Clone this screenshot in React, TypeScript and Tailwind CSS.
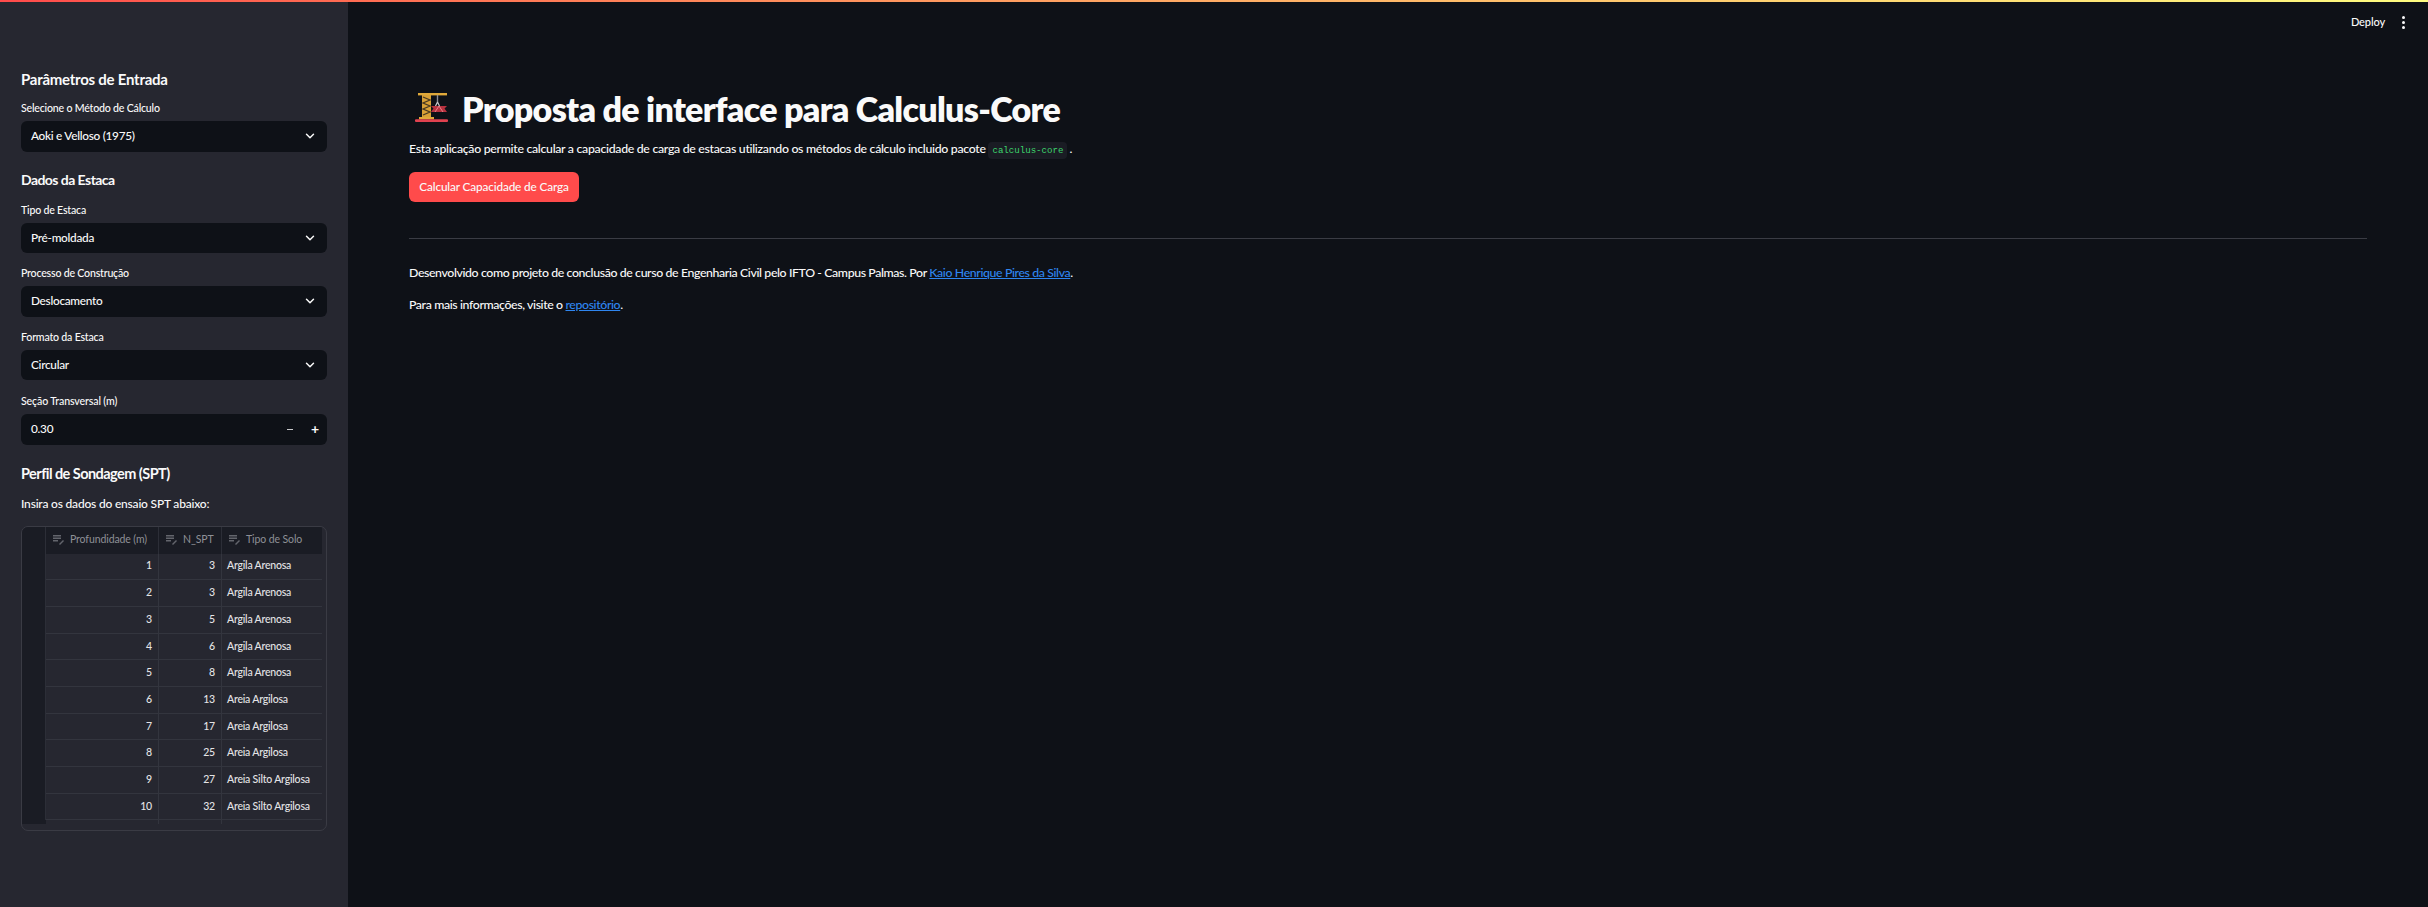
import { ChevronDown } from "lucide-react";

const rows = [
    { depth: 1, spt: 3, soil: "Argila Arenosa" },
    { depth: 2, spt: 3, soil: "Argila Arenosa" },
    { depth: 3, spt: 5, soil: "Argila Arenosa" },
    { depth: 4, spt: 6, soil: "Argila Arenosa" },
    { depth: 5, spt: 8, soil: "Argila Arenosa" },
    { depth: 6, spt: 13, soil: "Areia Argilosa" },
    { depth: 7, spt: 17, soil: "Areia Argilosa" },
    { depth: 8, spt: 25, soil: "Areia Argilosa" },
    { depth: 9, spt: 27, soil: "Areia Silto Argilosa" },
    { depth: 10, spt: 32, soil: "Areia Silto Argilosa" },
];

const Select = ({ label, value, className }: { label: string; value: string; className?: string }) => {
    return (
        <div className={className}>
            <div className="h-[14px] text-[10.6px] leading-[14px] tracking-[-0.2px] font-medium text-[#fafafa]">{label}</div>
            <div className="mt-[6px] h-[30.5px] rounded-[6px] bg-[#0e1117] flex items-center justify-between pl-[10px] pr-[10px]">
                <span className="text-[11.8px] tracking-[-0.28px] font-medium text-[#fafafa]">{value}</span>
                <ChevronDown size={14} strokeWidth={2.5} className="text-[#fafafa]" />
            </div>
        </div>
    );
};

const EditIcon = () => {
    return (
        <svg width="12" height="10" viewBox="0 0 12 10" className="shrink-0">
            <path d="M0 0.7h8M0 3.2h8M0 5.7h5" stroke="#63656c" strokeWidth="1.4" fill="none" />
            <path d="M6.5 9.5L10.5 5.5" stroke="#63656c" strokeWidth="1.4" fill="none" />
        </svg>
    );
};

const CraneIcon = () => {
    return (
        <svg width="36" height="36" viewBox="0 0 36 36" className="shrink-0">
            <rect x="4" y="3" width="29" height="2.4" fill="#e0a93a" />
            <rect x="8" y="5" width="9" height="24" fill="#d9a136" />
            <path d="M9 7l7 3-7 3 7 3-7 3 7 3-7 3" stroke="#4a3a22" strokeWidth="1.3" fill="none" />
            <rect x="5" y="27" width="15" height="2.4" fill="#e0a93a" />
            <rect x="1" y="29.3" width="33" height="2.6" rx="1" fill="#e0414f" />
            <path d="M23.5 5v7" stroke="#8d8f96" strokeWidth="1.4" />
            <path d="M23.5 12l-2 4M23.5 12l2 4" stroke="#c9c9cf" strokeWidth="1.2" />
            <path d="M17 16h16l-2.5 2.5 2.5 3.5h-16l2.5-3.5z" fill="#b8323f" />
            <path d="M25 16l-4 6M25 16l4 6" stroke="#e8808a" strokeWidth="1" />
        </svg>
    );
};

const DataTable = () => {
    return (
        <div className="mt-[14px] h-[305px] rounded-[7px] border border-[#3a3b44] overflow-hidden">
            <div className="grid grid-cols-[24px_113px_63px_100px] h-[27px] text-[10.5px] tracking-[-0.1px] text-[#8e9096]">
                <div className="bg-[#1a1c24] border-r border-[#2c2e37]" />
                <div className="bg-[#1a1c24] border-r border-[#2c2e37] flex items-center gap-[5px] pl-[7px]"><EditIcon />Profundidade (m)</div>
                <div className="bg-[#1a1c24] border-r border-[#2c2e37] flex items-center gap-[5px] pl-[7px]"><EditIcon />N_SPT</div>
                <div className="bg-[#1a1c24] flex items-center gap-[5px] pl-[7px]"><EditIcon />Tipo de Solo</div>
            </div>
            {rows.map((row) => (
                <div key={row.depth} className="grid grid-cols-[24px_113px_63px_100px] h-[26.7px] text-[10.5px] tracking-[-0.2px] font-medium text-[#e4e4e6]">
                    <div className="bg-[#1a1c24] border-r border-[#2c2e37]" />
                    <div className="border-r border-b border-[#33353e] flex items-center justify-end pr-[6px]">{row.depth}</div>
                    <div className="border-r border-b border-[#33353e] flex items-center justify-end pr-[6px]">{row.spt}</div>
                    <div className="border-b border-[#33353e] flex items-center pl-[5px]">{row.soil}</div>
                </div>
            ))}
            <div className="grid grid-cols-[24px_113px_63px] h-[4px]">
                <div className="bg-[#1a1c24]" />
                <div className="border-r border-[#33353e]" />
                <div className="border-r border-[#33353e]" />
            </div>
        </div>
    );
};

export default function App() {
    return (
        <div className="h-screen flex flex-col bg-[#0e1117] text-[#fafafa] overflow-hidden font-['Lato',sans-serif]">
            <div className="h-[2px] shrink-0 bg-gradient-to-r from-[#ff4b4b] to-[#fffd80]" />
            <div className="flex flex-1 min-h-0">
                <aside className="w-[348px] shrink-0 bg-[#262730] pt-[67px] px-[21px]">
                    <h2 className="h-[20px] text-[15px] leading-[20px] tracking-[-0.25px] font-bold">Parâmetros de Entrada</h2>
                    <Select className="mt-[12px]" label="Selecione o Método de Cálculo" value="Aoki e Velloso (1975)" />
                    <h2 className="mt-[18px] h-[20px] text-[14px] leading-[20px] tracking-[-0.55px] font-bold">Dados da Estaca</h2>
                    <Select className="mt-[13px]" label="Tipo de Estaca" value="Pré-moldada" />
                    <Select className="mt-[13px]" label="Processo de Construção" value="Deslocamento" />
                    <Select className="mt-[13px]" label="Formato da Estaca" value="Circular" />
                    <div className="mt-[14px]">
                        <div className="h-[14px] text-[10.6px] leading-[14px] tracking-[-0.13px] font-medium">Seção Transversal (m)</div>
                        <div className="mt-[6px] h-[30.5px] rounded-[6px] bg-[#0e1117] flex items-center pl-[10px] pr-[8px]">
                            <span className="text-[11.8px] tracking-[-0.28px] font-medium flex-1">0.30</span>
                            <span className="w-[6px] h-[1.5px] bg-[#c9c9cc] mr-[18px]" />
                            <span className="text-[14px] leading-none font-bold">+</span>
                        </div>
                    </div>
                    <h2 className="mt-[19px] h-[20px] text-[14.5px] leading-[20px] tracking-[-0.55px] font-bold">Perfil de Sondagem (SPT)</h2>
                    <p className="mt-[12px] h-[16px] text-[12px] leading-[16px] tracking-[-0.2px] font-medium">Insira os dados do ensaio SPT abaixo:</p>
                    <DataTable />
                </aside>
                <main className="flex-1 min-w-0 flex flex-col">
                    <header className="h-[40px] shrink-0 flex items-center justify-end gap-[17px] pr-[23px]">
                        <span className="text-[11px] tracking-[-0.1px] font-medium">Deploy</span>
                        <span className="flex flex-col gap-[2px]">
                            <i className="block w-[3px] h-[3px] rounded-full bg-[#fafafa]" />
                            <i className="block w-[3px] h-[3px] rounded-full bg-[#fafafa]" />
                            <i className="block w-[3px] h-[3px] rounded-full bg-[#fafafa]" />
                        </span>
                    </header>
                    <div className="pt-[44px] pl-[61px] pr-[61px]">
                        <h1 className="h-[44px] flex items-center gap-[12px] pl-[5px] text-[34px] tracking-[-0.7px] font-extrabold">
                            <CraneIcon />
                            <span>Proposta de interface para Calculus-Core</span>
                        </h1>
                        <p className="mt-[10px] h-[18px] text-[12.3px] leading-[18px] tracking-[-0.3px] font-medium">
                            Esta aplicação permite calcular a capacidade de carga de estacas utilizando os métodos de cálculo incluido pacote{" "}
                            <code className="font-['Liberation_Mono',monospace] text-[9.1px] tracking-normal text-[#3dd56d] bg-[#1a1c24] rounded-[4px] px-[4px] py-[3px]">calculus-core</code>
                            <span className="ml-[2px]">.</span>
                        </p>
                        <button className="mt-[14px] block h-[30px] w-[170px] rounded-[6px] bg-[#ff4b4b] text-[11.8px] tracking-[-0.15px] font-medium text-[#fafafa]">Calcular Capacidade de Carga</button>
                        <hr className="mt-[36px] border-0 h-px bg-[#3a3c44]" />
                        <p className="mt-[25px] h-[18px] text-[12.3px] leading-[18px] tracking-[-0.38px] font-medium">
                            Desenvolvido como projeto de conclusão de curso de Engenharia Civil pelo IFTO - Campus Palmas. Por{" "}
                            <a className="text-[#2f86f0] underline">Kaio Henrique Pires da Silva</a>.
                        </p>
                        <p className="mt-[14px] h-[18px] text-[12.3px] leading-[18px] tracking-[-0.38px] font-medium">
                            Para mais informações, visite o <a className="text-[#2f86f0] underline">repositório</a>.
                        </p>
                    </div>
                </main>
            </div>
        </div>
    );
}
